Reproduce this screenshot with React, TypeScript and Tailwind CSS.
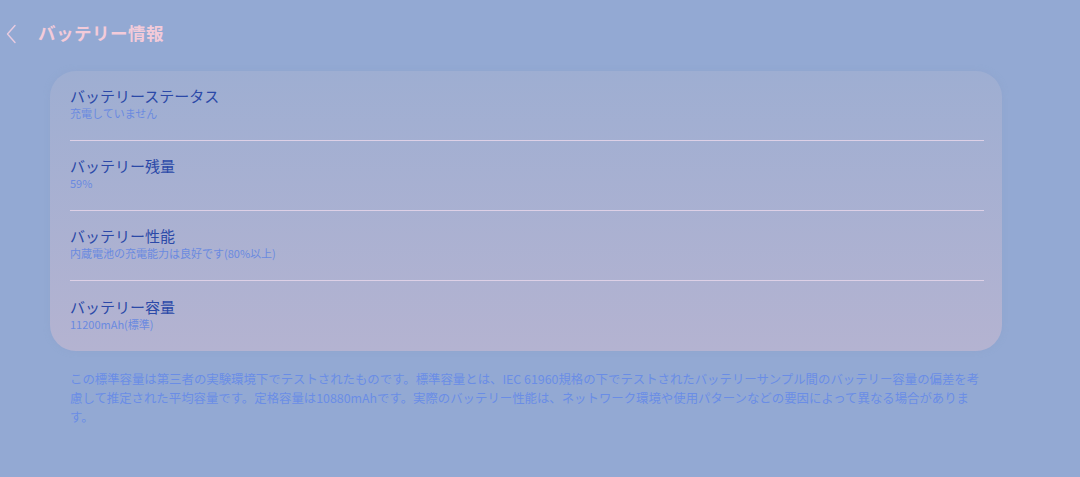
const rows = [
  { title: "バッテリーステータス", value: "充電していません" },
  { title: "バッテリー残量", value: "59%" },
  { title: "バッテリー性能", value: "内蔵電池の充電能力は良好です(80%以上)" },
  { title: "バッテリー容量", value: "11200mAh(標準)" },
];

export default function App() {
  return (
    <div
      className="h-[477px] w-[1080px] overflow-hidden bg-[#93a9d3]"
      style={{ fontFamily: '"Noto Sans CJK JP", "Noto Sans", sans-serif' }}
    >
      <header className="flex h-[68px] items-center pb-[1px]">
        <button className="ml-[4px] flex h-[24px] w-[14px] items-center justify-center text-[#e8cbe0]">
          <svg width="12" height="20" viewBox="0 0 12 20" fill="none">
            <path d="M10 1.5 L2.5 10 L10 18.5" stroke="currentColor" strokeWidth="1.4" strokeLinecap="round" strokeLinejoin="round" />
          </svg>
        </button>
        <h1 className="ml-[20px] text-[17.5px] font-bold tracking-[0.5px] text-[#f3cbd9]">バッテリー情報</h1>
      </header>

      <section className="mx-[50px] mt-[3px] w-[952px] rounded-[26px] bg-gradient-to-b from-[#9eaed2] to-[#b4b3d1] pl-[20px] pr-[18px] shadow-[0_0_6px_rgba(140,160,200,0.4)]">
        {rows.map((row, i) => (
          <div
            key={row.title}
            className={`flex h-[70px] flex-col justify-center pb-[4px] ${i < rows.length - 1 ? "border-b border-[#ddd0e6]" : ""}`}
          >
            <div className="text-[15px] leading-[20px] text-[#2b49a8]">{row.title}</div>
            <div className="text-[11px] leading-[15px] text-[#6a8ae0]">{row.value}</div>
          </div>
        ))}
      </section>

      <p className="ml-[70px] mt-[19px] w-[940px] text-[12.4px] leading-[19px] text-[#6a8de6]">
        この標準容量は第三者の実験環境下でテストされたものです。標準容量とは、IEC
        61960規格の下でテストされたバッテリーサンプル間のバッテリー容量の偏差を考
        <br />
        慮して推定された平均容量です。定格容量は10880mAhです。実際のバッテリー性能は、ネットワーク環境や使用パターンなどの要因によって異なる場合がありま
        <br />
        す。
      </p>
    </div>
  );
}
